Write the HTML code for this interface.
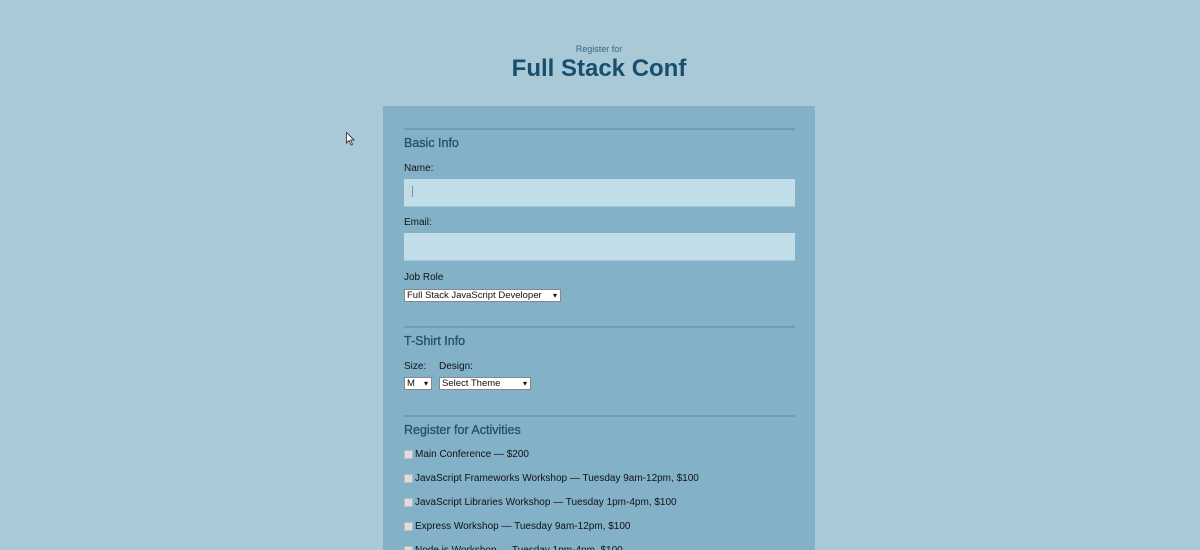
<!DOCTYPE html>
<html><head><style>
html,body{margin:0;width:1200px;height:550px;overflow:hidden}
body{background:#a9c9d6;font-family:"Liberation Sans",sans-serif;position:relative}
.a{position:absolute;white-space:nowrap}
.panel{position:absolute;left:383px;top:106px;width:432px;height:444px;background:#83b2c8}
.hr{position:absolute;left:404px;width:391px;height:2px;background:#6c9fb7}
.h{position:absolute;left:404px;font-size:12.5px;color:#1f5270;-webkit-text-stroke:0.3px #1f5270}
.l{position:absolute;left:404px;font-size:10px;color:#111}
.in{position:absolute;left:404px;width:391px;height:27px;background:#c0dde8;border-bottom:1px solid #a3c9d9}
.sel{position:absolute;background:#fff;border:1px solid #888;font-size:9.5px;color:#111;height:11px;line-height:11px;padding-left:2px;box-sizing:content-box}
.sel:after{content:"▾";position:absolute;right:3px;top:0;font-size:8px}
.cb{position:absolute;left:404px;width:7px;height:7px;background:#ddd;border:1px solid #bbb}
.t{position:absolute;left:415px;font-size:10px;color:#111}
</style></head><body>
<div class="a" style="left:0;width:1198px;text-align:center;top:44px;font-size:9px;color:#3a6885">Register for</div>
<div class="a" style="left:0;width:1198px;text-align:center;top:55px;font-size:24px;font-weight:bold;color:#184f6e">Full Stack Conf</div>
<svg class="a" style="left:346px;top:132px" width="10" height="14"><path d="M0.5 0.5 L0.5 11 L3 8.5 L5 13 L6.5 12.3 L4.6 8 L8 8 Z" fill="#fff" stroke="#222" stroke-width="0.8"/></svg>
<div class="panel"></div>
<div class="hr" style="top:128px"></div>
<div class="h" style="top:136px">Basic Info</div>
<div class="l" style="top:163px">Name:</div>
<div class="in" style="top:179px"></div>
<div class="a" style="left:412px;top:186px;width:1px;height:11px;background:#889"></div>
<div class="l" style="top:217px">Email:</div>
<div class="in" style="top:233px"></div>
<div class="l" style="top:272px">Job Role</div>
<div class="sel" style="left:404px;top:289px;width:153px">Full Stack JavaScript Developer</div>
<div class="hr" style="top:326px"></div>
<div class="h" style="top:334px">T-Shirt Info</div>
<div class="l" style="top:361px">Size:</div>
<div class="l" style="left:439px;top:361px">Design:</div>
<div class="sel" style="left:404px;top:377px;width:24px">M</div>
<div class="sel" style="left:439px;top:377px;width:88px">Select Theme</div>
<div class="hr" style="top:415px"></div>
<div class="h" style="top:423px">Register for Activities</div>
<div class="cb" style="top:450px"></div><div class="t" style="top:449px">Main Conference — $200</div>
<div class="cb" style="top:474px"></div><div class="t" style="top:473px">JavaScript Frameworks Workshop — Tuesday 9am-12pm, $100</div>
<div class="cb" style="top:498px"></div><div class="t" style="top:497px">JavaScript Libraries Workshop — Tuesday 1pm-4pm, $100</div>
<div class="cb" style="top:522px"></div><div class="t" style="top:521px">Express Workshop — Tuesday 9am-12pm, $100</div>
<div class="cb" style="top:546px"></div><div class="t" style="top:545px">Node.js Workshop — Tuesday 1pm-4pm, $100</div>
</body></html>
